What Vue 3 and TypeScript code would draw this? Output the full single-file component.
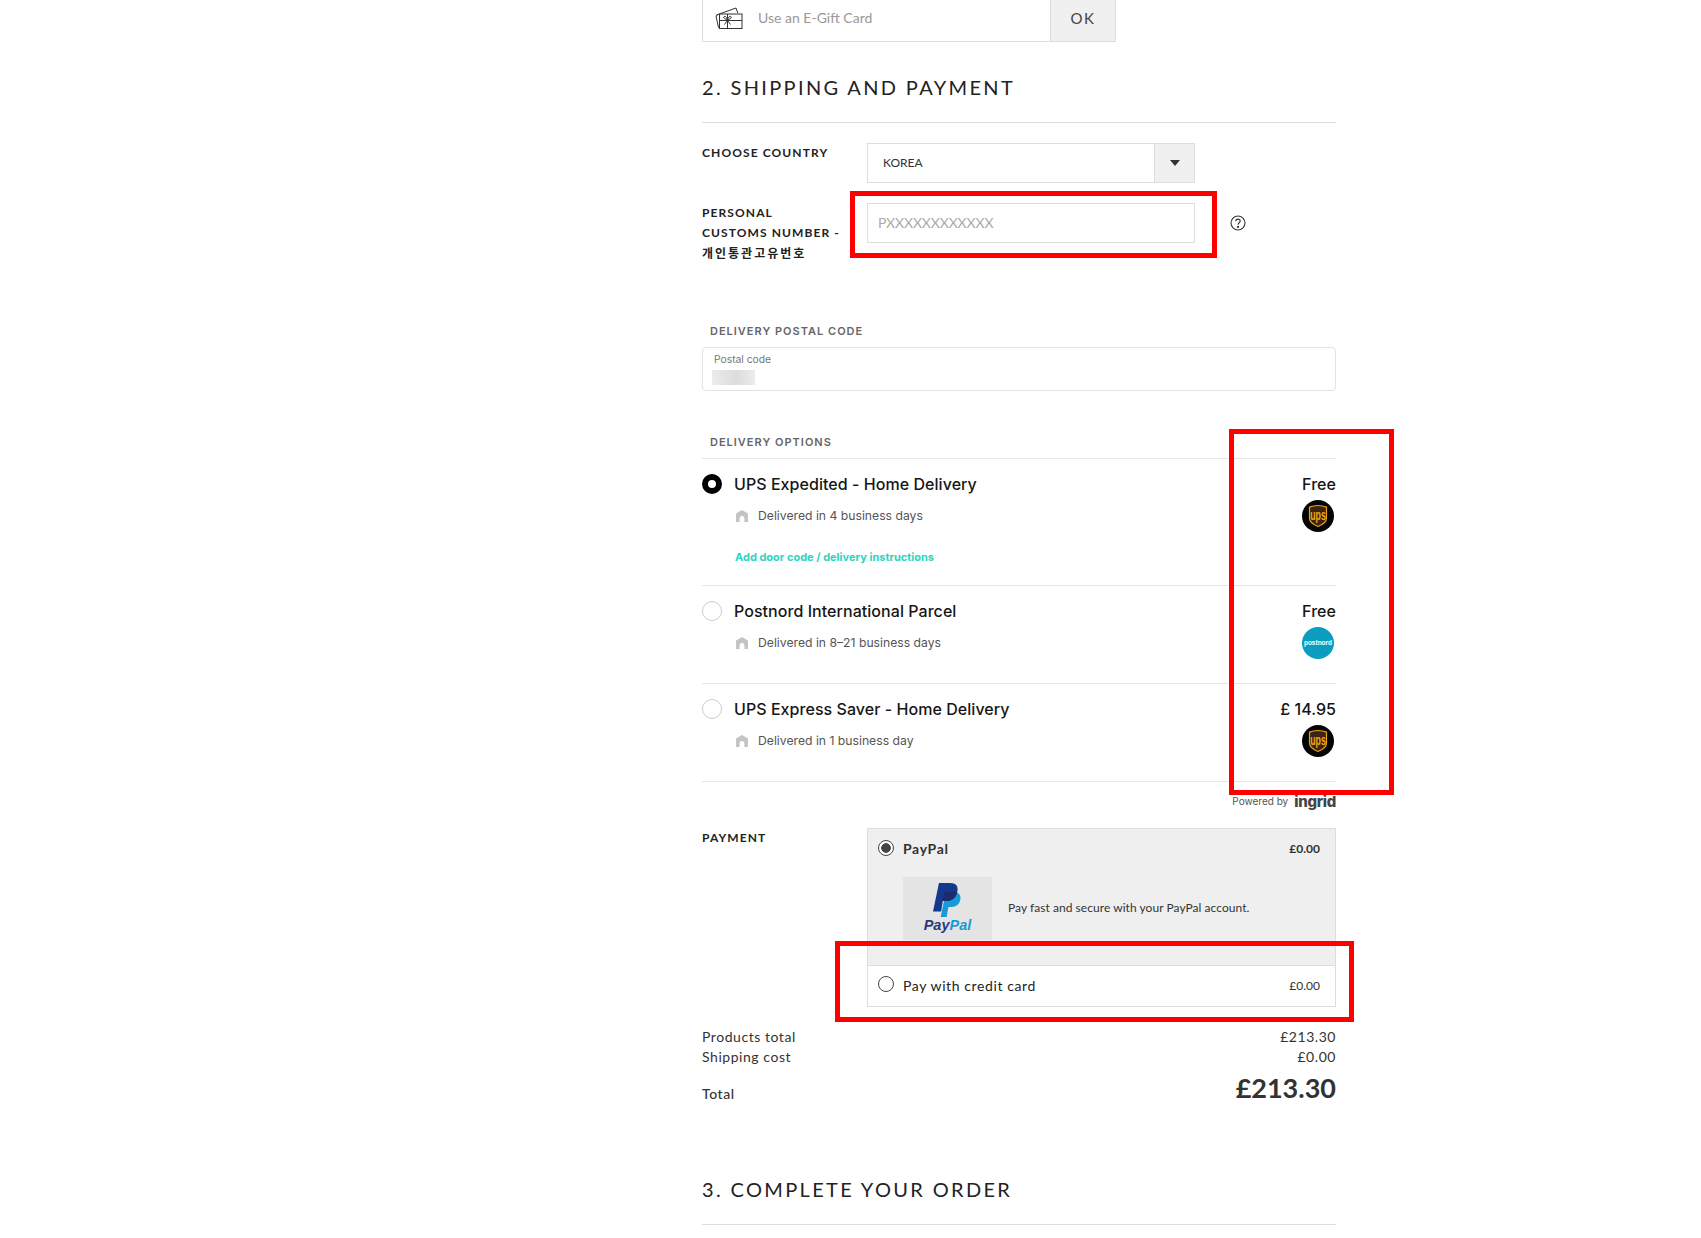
<script setup lang="ts">
interface DeliveryOption {
  name: string
  eta: string
  price: string
  carrier: 'ups' | 'postnord'
  selected?: boolean
  link?: string
}

const options: DeliveryOption[] = [
  {
    name: 'UPS Expedited - Home Delivery',
    eta: 'Delivered in 4 business days',
    price: 'Free',
    carrier: 'ups',
    selected: true,
    link: 'Add door code / delivery instructions',
  },
  {
    name: 'Postnord International Parcel',
    eta: 'Delivered in 8–21 business days',
    price: 'Free',
    carrier: 'postnord',
  },
  {
    name: 'UPS Express Saver - Home Delivery',
    eta: 'Delivered in 1 business day',
    price: '£ 14.95',
    carrier: 'ups',
  },
]
</script>

<template>
  <div class="page">
    <div class="column">
      <div class="gift">
        <svg class="gift-icon" width="28" height="23" viewBox="0 0 28 23" fill="none" stroke="#333" stroke-width="1">
          <path d="M3 7.500 1 9l2.500 11.500 3.500-.7" />
          <path d="M1.500 8 21 1l1.800 5" />
          <rect x="4.500" y="7" width="22.500" height="14.500" fill="#fff" />
          <path d="M4.500 13.500h22.500M12.500 7v14.500M12.500 13.500 8.500 10.500c1-2 3-1.500 4 3 1-4.500 3-5 4-3l-4 3-3 4M12.500 13.500l3 4" />
        </svg>
        <span class="gift-text">Use an E-Gift Card</span>
        <span class="gift-ok">OK</span>
      </div>

      <h2 class="heading">2. SHIPPING AND PAYMENT</h2>

      <div class="form-row country-row">
        <label class="form-label">CHOOSE COUNTRY</label>
        <div class="select">
          <span class="select-value">KOREA</span>
          <span class="select-arrow"><i></i></span>
        </div>
      </div>

      <div class="form-row customs-row">
        <label class="form-label">PERSONAL<br />CUSTOMS NUMBER -<br /><span class="korean">개인통관고유번호</span></label>
        <div class="customs-field">
          <div class="text-input">PXXXXXXXXXXXX</div>
          <svg class="help" width="16" height="16" viewBox="0 0 16 16" fill="none" stroke="#333" stroke-width="1.100">
            <circle cx="8" cy="8" r="7" />
            <path d="M5.800 6.200c0-1.300 1-2.100 2.200-2.100s2.200.8 2.200 2c0 1.700-2.200 1.700-2.200 3.600" />
            <circle cx="8" cy="11.900" r=".5" fill="#333" />
          </svg>
          <div class="mark mark-customs"></div>
        </div>
      </div>

      <div class="ingrid">
        <div class="ingrid-label postal-label">DELIVERY POSTAL CODE</div>
        <div class="postal-box">
          <span class="postal-caption">Postal code</span>
          <span class="postal-blur"></span>
        </div>

        <div class="ingrid-label options-label">DELIVERY OPTIONS</div>
        <div class="options">
          <div v-for="option in options" :key="option.name" class="option">
            <div class="option-main">
              <div class="option-title">
                <span class="option-radio" :class="{ selected: option.selected }"></span>
                <span>{{ option.name }}</span>
              </div>
              <div class="option-eta">
                <svg width="12" height="12" viewBox="0 0 12 12" fill="#c4c4c4">
                  <path d="M6 0 0 3.600V12h3.600V8.400a2.400 2.400 0 0 1 4.800 0V12H12V3.600z" />
                </svg>
                <span>{{ option.eta }}</span>
              </div>
              <a v-if="option.link" class="option-link">{{ option.link }}</a>
            </div>
            <div class="option-side">
              <span class="option-price">{{ option.price }}</span>
              <svg v-if="option.carrier === 'ups'" class="carrier" width="32" height="32" viewBox="0 0 32 32">
                <circle cx="16" cy="16" r="16" fill="#050505" />
                <path d="M16 5.500c3 0 6 .5 8.500 1.600v11c0 4.500-4 6.700-8.500 8.400-4.500-1.700-8.500-3.900-8.500-8.400v-11C10 6 13 5.500 16 5.500z" fill="#3d2412" stroke="#e6a117" stroke-width="1.200" />
                <text class="ups-text" transform="translate(16 19.500) scale(0.8 1.300)">ups</text>
              </svg>
              <svg v-else class="carrier" width="32" height="32" viewBox="0 0 32 32">
                <circle cx="16" cy="16" r="16" fill="#0a9dc0" />
                <text x="16" y="18" class="postnord-text">postnord</text>
              </svg>
            </div>
          </div>
        </div>
        <div class="powered">
          <span>Powered by</span>
          <span class="ingrid-logo">ingrid</span>
        </div>
        <div class="mark mark-options"></div>
      </div>

      <div class="form-row payment-row">
        <label class="form-label">PAYMENT</label>
        <div class="payment-box">
          <div class="pay-method active">
            <div class="pay-head">
              <span class="pay-radio checked"></span>
              <span class="pay-name">PayPal</span>
              <span class="pay-fee">£0.00</span>
            </div>
            <div class="pay-body">
              <div class="paypal-logo">
                <svg width="29" height="35" viewBox="0 0 34 38" preserveAspectRatio="none">
                  <path d="M15 10h10c6 0 8 3.500 7 8-1 5.500-5 8-10 8h-4l-2 11H9z" fill="#169bd7" />
                  <path d="M7 0h13c7 0 10 3.500 8.500 9.500C27 16 22.500 19.500 16.500 19.500H11.500L9.500 31H0z" fill="#14388c" />
                  <path d="M11.500 19.500 13.500 9.500h14.700C27.500 15.500 22.500 19.500 16.500 19.500z" fill="#1c2a6e" />
                </svg>
                <span class="paypal-word"><b>Pay</b><em>Pal</em></span>
              </div>
              <span class="pay-desc">Pay fast and secure with your PayPal account.</span>
            </div>
          </div>
          <div class="pay-method">
            <div class="pay-head card-head">
              <span class="pay-radio"></span>
              <span class="pay-name plain">Pay with credit card</span>
              <span class="pay-fee plain">£0.00</span>
            </div>
          </div>
          <div class="mark mark-card"></div>
        </div>
      </div>

      <div class="totals">
        <div class="total-line"><span>Products total</span><span>£213.30</span></div>
        <div class="total-line"><span>Shipping cost</span><span>£0.00</span></div>
        <div class="total-line grand">
          <span class="grand-label">Total</span>
          <span class="grand-value">£213.30</span>
        </div>
      </div>

      <h2 class="heading heading-last">3. COMPLETE YOUR ORDER</h2>
    </div>
  </div>
</template>

<style>
html,
body {
  margin: 0;
  background: #fff;
  overflow: hidden;
}
</style>

<style scoped>
.page {
  height: 1238px;
  overflow: hidden;
  font-family: Lato, "Liberation Sans", sans-serif;
  color: #222;
}

.column {
  width: 634px;
  margin-left: 702px;
}

.gift {
  width: 414px;
  height: 42px;
  box-sizing: border-box;
  display: flex;
  align-items: stretch;
  border: 1px solid #ddd;
  border-top: 0;
}

.gift-icon {
  margin: 7px 0 0 12px;
}

.gift-text {
  flex: 1;
  margin-left: 15px;
  font-size: 14px;
  line-height: 36px;
  color: #999;
}

.gift-ok {
  width: 64px;
  background: #f0f0f0;
  border-left: 1px solid #ddd;
  text-align: center;
  font-size: 15px;
  line-height: 36px;
  letter-spacing: 1.500px;
  color: #444;
}

.heading {
  margin: 33px 0 0;
  padding-bottom: 23px;
  border-bottom: 1px solid #ddd;
  font-size: 20px;
  line-height: 24px;
  font-weight: 400;
  letter-spacing: 2.350px;
  color: #222;
}

.form-row {
  display: grid;
  grid-template-columns: 165px 1fr;
}

.country-row {
  margin-top: 20px;
}

.customs-row {
  margin-top: 20px;
}

.customs-row .form-label {
  height: 60px;
}

.form-label {
  font-size: 12px;
  line-height: 20px;
  font-weight: 700;
  letter-spacing: 1.100px;
  color: #222;
}

.korean {
  font-family: "Noto Sans CJK KR", sans-serif;
  font-weight: 700;
  letter-spacing: 2px;
  vertical-align: 1px;
}

.select {
  width: 328px;
  height: 40px;
  box-sizing: border-box;
  display: flex;
  border: 1px solid #ddd;
}

.select-value {
  flex: 1;
  padding-left: 15px;
  font-size: 12px;
  line-height: 38px;
  color: #333;
}

.select-arrow {
  width: 39px;
  display: flex;
  align-items: center;
  justify-content: center;
  background: #f0f0f0;
  border-left: 1px solid #ddd;
}

.select-arrow i {
  border-left: 5px solid transparent;
  border-right: 5px solid transparent;
  border-top: 6px solid #333;
}

.customs-field {
  position: relative;
  height: 59px;
}

.text-input {
  width: 328px;
  height: 40px;
  box-sizing: border-box;
  border: 1px solid #ddd;
  padding-left: 10px;
  font-size: 14px;
  line-height: 38px;
  color: #aaa;
  letter-spacing: -0.150px;
}

.help {
  position: absolute;
  left: 363px;
  top: 12px;
}

.mark {
  position: absolute;
  box-sizing: border-box;
  border: 5px solid #f00;
  pointer-events: none;
}

.mark-customs {
  left: -17px;
  top: -12px;
  width: 367px;
  height: 67px;
}

.ingrid {
  position: relative;
  font-family: Inter, "Liberation Sans", sans-serif;
}

.ingrid-label {
  padding-left: 8px;
  font-size: 11px;
  line-height: 16px;
  font-weight: 600;
  letter-spacing: 1px;
  color: #666;
}

.postal-label {
  margin-top: 60px;
}

.postal-box {
  margin-top: 8px;
  height: 44px;
  box-sizing: border-box;
  border: 1px solid #e3e3e3;
  border-radius: 4px;
  padding: 5px 0 0 9px;
  display: flex;
  flex-direction: column;
}

.postal-caption {
  margin-left: 2px;
  font-size: 10.300px;
  line-height: 13px;
  color: #777;
}

.postal-blur {
  width: 43px;
  height: 15px;
  margin-top: 4px;
  background: linear-gradient(90deg, #ececec, #dcdcdc 55%, #ececec);
}

.options-label {
  margin-top: 43px;
  padding-bottom: 8px;
}

.options {
  border-top: 1px solid #e6e6e6;
}

.option {
  display: flex;
  justify-content: space-between;
  padding-top: 13px;
  border-bottom: 1px solid #e6e6e6;
}

.option-main {
  padding-bottom: 30px;
}

.option:first-child .option-main {
  padding-bottom: 20px;
}

.option-title {
  display: flex;
  align-items: center;
  gap: 12px;
  font-size: 16px;
  line-height: 24px;
  font-weight: 500;
  letter-spacing: 0.050px;
  color: #161616;
}

.option-radio {
  width: 20px;
  height: 20px;
  box-sizing: border-box;
  border: 1px solid #ccc;
  border-radius: 50%;
}

.option-radio.selected {
  border: 6px solid #000;
}

.option-eta {
  display: flex;
  align-items: center;
  gap: 10px;
  margin: 10px 0 0 34px;
  font-size: 12.200px;
  line-height: 20px;
  color: #555;
}

.option-link {
  display: block;
  margin: 23px 0 0 33px;
  font-size: 11px;
  line-height: 16px;
  font-weight: 700;
  color: #2dd4bf;
}

.option-side {
  display: flex;
  flex-direction: column;
  align-items: flex-end;
}

.option-price {
  font-size: 16px;
  line-height: 24px;
  font-weight: 500;
  letter-spacing: 0.050px;
  color: #161616;
}

.carrier {
  margin: 4px 2px 0 0;
}

.ups-text {
  font-family: "Liberation Sans", sans-serif;
  font-size: 11px;
  font-weight: 700;
  fill: #f0a818;
  text-anchor: middle;
}

.postnord-text {
  font-family: "Liberation Sans", sans-serif;
  font-size: 6.500px;
  font-weight: 700;
  fill: #fff;
  text-anchor: middle;
}

.powered {
  margin-top: 10px;
  height: 18px;
  display: flex;
  justify-content: flex-end;
  align-items: center;
  gap: 6px;
  font-size: 10px;
  color: #555;
}

.ingrid-logo {
  font-size: 15px;
  font-weight: 800;
  color: #444;
  letter-spacing: -0.300px;
}

.mark-options {
  left: 527px;
  top: 106px;
  width: 165px;
  height: 366px;
}

.payment-row {
  margin-top: 18px;
}

.payment-box {
  position: relative;
  border: 1px solid #ddd;
}

.pay-method.active {
  height: 137px;
  box-sizing: border-box;
  background: #efefef;
  border-bottom: 1px solid #ddd;
}

.pay-head {
  display: flex;
  align-items: center;
  padding: 10px 15px 0 10px;
}

.card-head {
  height: 40px;
  box-sizing: border-box;
  padding-top: 10px;
  align-items: flex-start;
}

.pay-radio {
  width: 16px;
  height: 16px;
  box-sizing: border-box;
  border: 1px solid #444;
  border-radius: 50%;
  background: #fff;
}

.pay-radio.checked {
  margin-bottom: 2px;
  background: radial-gradient(circle, #444 4.500px, #fff 5px);
}

.pay-name {
  flex: 1;
  margin-left: 9px;
  font-size: 14px;
  line-height: 20px;
  font-weight: 700;
  letter-spacing: 0.650px;
  color: #333;
}

.pay-name.plain {
  font-weight: 400;
  letter-spacing: 0.600px;
  color: #222;
}

.pay-fee {
  font-size: 12px;
  line-height: 20px;
  font-weight: 700;
  color: #333;
}

.pay-fee.plain {
  font-weight: 400;
}

.pay-body {
  display: flex;
  align-items: center;
  gap: 16px;
  margin: 18px 0 0 35px;
}

.paypal-logo {
  width: 89px;
  height: 63px;
  background: #e4e4e4;
  display: flex;
  flex-direction: column;
  align-items: center;
  padding-top: 6px;
  box-sizing: border-box;
}

.paypal-word {
  font-family: "Liberation Sans", sans-serif;
  font-size: 14.500px;
  line-height: 15px;
  font-weight: 700;
  font-style: italic;
}

.paypal-word b {
  color: #253b80;
}

.paypal-word em {
  color: #179bd7;
}

.pay-desc {
  padding-bottom: 3px;
  font-size: 12px;
  letter-spacing: 0.050px;
  color: #333;
}

.mark-card {
  left: -33px;
  top: 112px;
  width: 519px;
  height: 81px;
}

.totals {
  margin-top: 20px;
  font-size: 14px;
  line-height: 20px;
  letter-spacing: 0.550px;
  color: #333;
}

.total-line {
  display: flex;
  justify-content: space-between;
}

.grand {
  align-items: flex-end;
  margin-top: 3px;
}

.grand-label {
  padding-bottom: 2px;
  font-weight: 500;
}

.grand-value {
  font-size: 27px;
  line-height: 36px;
  font-weight: 700;
  letter-spacing: 0;
}

.heading-last {
  margin-top: 71px;
}
</style>
